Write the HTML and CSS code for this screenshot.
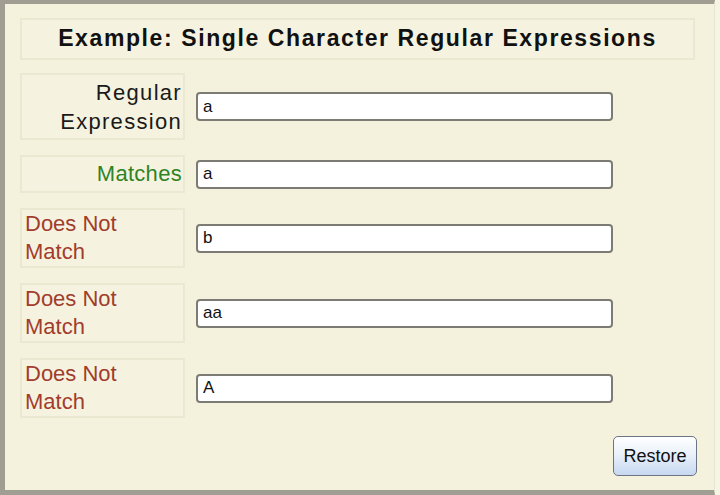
FILE: index.html
```html
<!DOCTYPE html>
<html>
<head>
<meta charset="utf-8">
<link rel="stylesheet" href="styles.css">
</head>
<body>
<div class="frame">
  <div class="title">Example: Single Character Regular Expressions</div>
  <div class="rows">
    <div class="row">
      <div class="label label-regex">Regular Expression</div>
      <input class="field" type="text" value="a">
    </div>
    <div class="row">
      <div class="label label-match">Matches</div>
      <input class="field" type="text" value="a">
    </div>
    <div class="row">
      <div class="label label-nomatch">Does Not Match</div>
      <input class="field" type="text" value="b">
    </div>
    <div class="row">
      <div class="label label-nomatch">Does Not Match</div>
      <input class="field" type="text" value="aa">
    </div>
    <div class="row">
      <div class="label label-nomatch">Does Not Match</div>
      <input class="field" type="text" value="A">
    </div>
  </div>
  <div class="actions">
    <button class="restore" type="button">Restore</button>
  </div>
</div>
</body>
</html>
```
FILE: styles.css
```css
html, body {
  margin: 0;
  padding: 0;
  background: #f6f4e2;
}

.frame {
  box-sizing: border-box;
  width: 715px;
  height: 495px;
  background: #f4f2dd;
  border-top: 4px solid #a09d92;
  border-left: 5px solid #a09d92;
  border-bottom: 5px solid #a09d92;
  border-right: 1px solid #e6e4d2;
  padding: 14px 19px 0 15px;
  font-family: "Liberation Sans", Arial, sans-serif;
}

.title {
  box-sizing: border-box;
  height: 42px;
  border: 2px solid #ebe8d2;
  background: #f5f3e0;
  font-weight: bold;
  font-size: 23px;
  letter-spacing: 1.6px;
  line-height: 37px;
  text-align: center;
  color: #111;
}

.rows {
  display: flex;
  flex-direction: column;
  gap: 15px;
  margin-top: 13px;
}

.row {
  display: flex;
  align-items: center;
  gap: 11px;
}

.label {
  box-sizing: border-box;
  width: 165px;
  flex: none;
  border: 2px solid #ebe8d2;
  background: #f5f3e0;
  font-size: 22px;
  line-height: 28px;
  padding: 0 3px;
}

.label-regex {
  text-align: right;
  color: #1a1a1a;
  line-height: 29px;
  padding: 3px 1px 2px 3px;
  letter-spacing: 1.3px;
}

.label-match {
  text-align: right;
  color: #2f8325;
  padding: 3px 1px;
  letter-spacing: 0.3px;
}

.label-nomatch {
  text-align: left;
  color: #a23c2c;
  padding-right: 40px;
}

.field {
  box-sizing: border-box;
  width: 417px;
  height: 29px;
  margin: 0;
  border: 2px solid #7d7c74;
  border-radius: 4px;
  background: #fff;
  padding: 0 5px;
  font-family: "Liberation Sans", Arial, sans-serif;
  font-size: 17px;
  color: #111;
  outline: none;
}

.actions {
  display: flex;
  justify-content: flex-end;
  margin-top: 18px;
  margin-right: -2px;
}

.restore {
  box-sizing: border-box;
  width: 84px;
  height: 40px;
  border: 1px solid #6d7584;
  border-radius: 5px;
  background: linear-gradient(to bottom, #ffffff 0%, #eaf1fa 45%, #c6d8f0 100%);
  font-family: "Liberation Sans", Arial, sans-serif;
  font-size: 18px;
  color: #111;
  padding: 0;
}
```
